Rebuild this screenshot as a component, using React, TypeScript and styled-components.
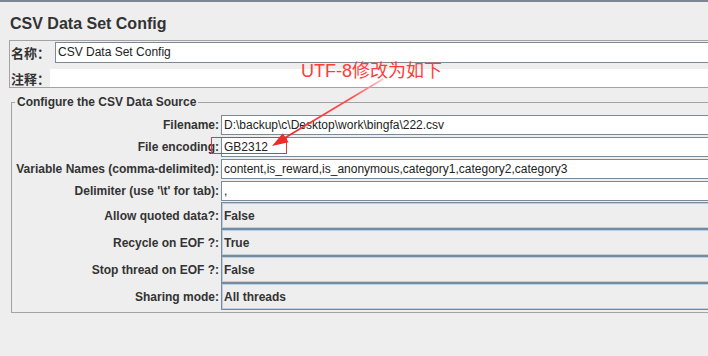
import styled, { createGlobalStyle } from "styled-components";

const GlobalStyle = createGlobalStyle`
  html, body {
    margin: 0;
    padding: 0;
    background: #eeeeee;
    overflow: hidden;
  }
  body {
    font-family: "Liberation Sans", Arial, "Noto Sans CJK SC", sans-serif;
    color: #333333;
  }
`;

const Page = styled.div`
  position: relative;
  width: 708px;
  height: 356px;
  background: #eeeeee;
`;

const TopBar = styled.div`
  height: 2px;
  background: #7d8794;
`;

const Title = styled.h1`
  margin: 0;
  padding: 12px 0 0 10px;
  height: 26px;
  font-size: 16px;
  line-height: 20px;
  font-weight: bold;
  color: #333333;
`;

// name / comment box
const NameBox = styled.div`
  margin-left: 9px;
  height: 46px;
  border: 1px solid #a3a3a3;
  border-right: none;
  display: flex;
  flex-direction: column;
`;

const NameRow = styled.div`
  display: flex;
  height: 21px;
  padding-top: 1px;
`;

const CommentRow = styled.div`
  display: flex;
  height: 18px;
  margin-top: 6px;
`;

const CnLabel = styled.label<{ $width: number }>`
  width: ${(p) => p.$width}px;
  flex: none;
  box-sizing: border-box;
  padding-left: 1px;
  display: flex;
  align-items: center;
  font-family: "Noto Sans CJK SC", sans-serif;
  font-size: 13px;
  font-weight: bold;
  color: #333333;
`;

const NameInput = styled.div`
  flex: 1;
  box-sizing: border-box;
  border: 1px solid #7a8a99;
  border-right: none;
  background: #ffffff;
  padding-left: 2px;
  font-size: 12px;
  line-height: 19px;
  color: #222222;
`;

const CommentArea = styled.div`
  flex: 1;
  background: #ffffff;
`;

// CSV data source group
const Group = styled.fieldset`
  margin: 7px 0 0 11px;
  padding: 6px 0 2px 0;
  border: 1px solid #a3a3a3;
  border-right: none;
  min-width: 0;
`;

const GroupTitle = styled.legend`
  margin-left: 3px;
  padding: 0 2px;
  font-size: 12px;
  line-height: 14px;
  font-weight: bold;
  color: #333333;
`;

const TextRows = styled.div`
  display: flex;
  flex-direction: column;
  gap: 2px;
`;

const ComboRows = styled.div`
  display: flex;
  flex-direction: column;
  margin-top: 1px;
`;

const Row = styled.div<{ $height: number }>`
  display: grid;
  grid-template-columns: 209px 1fr;
  height: ${(p) => p.$height}px;
`;

const Label = styled.label`
  align-self: center;
  text-align: right;
  padding-right: 2px;
  font-size: 12px;
  font-weight: bold;
  white-space: nowrap;
  color: #333333;
`;

const TextField = styled.div`
  box-sizing: border-box;
  border: 1px solid #7a8a99;
  border-right: none;
  background: #ffffff;
  padding-left: 2px;
  font-size: 12px;
  line-height: 18px;
  white-space: nowrap;
  overflow: hidden;
  color: #222222;
`;

const Combo = styled.div`
  box-sizing: border-box;
  border: 1px solid #7a8a99;
  border-right: none;
  box-shadow: inset 1px 1px 0 #b8cfe5, inset 0 -1px 0 #b8cfe5;
  background: #eeeeee;
  padding-left: 2px;
  display: flex;
  align-items: center;
  font-size: 12px;
  font-weight: bold;
  color: #333333;
`;

// red annotation on top of the screenshot
const Note = styled.span`
  position: absolute;
  left: 301px;
  top: 62px;
  font-family: "Liberation Sans", "Noto Sans CJK SC", sans-serif;
  font-size: 18px;
  line-height: 18px;
  color: #ff3b3b;
  white-space: nowrap;
`;

const Highlight = styled.div`
  position: absolute;
  left: 211px;
  top: 137px;
  width: 76px;
  height: 17px;
  box-sizing: border-box;
  border: 1px solid #e83535;
`;

const ArrowLayer = styled.svg`
  position: absolute;
  left: 0;
  top: 0;
  pointer-events: none;
`;

const textRows = [
  { label: "Filename:", value: "D:\\backup\\c\\Desktop\\work\\bingfa\\222.csv" },
  { label: "File encoding:", value: "GB2312" },
  {
    label: "Variable Names (comma-delimited):",
    value: "content,is_reward,is_anonymous,category1,category2,category3",
  },
  { label: "Delimiter (use '\\t' for tab):", value: "," },
];

const comboRows = [
  { label: "Allow quoted data?:", value: "False" },
  { label: "Recycle on EOF ?:", value: "True" },
  { label: "Stop thread on EOF ?:", value: "False" },
  { label: "Sharing mode:", value: "All threads" },
];

export default function App() {
  return (
    <Page>
      <GlobalStyle />
      <TopBar />
      <Title>CSV Data Set Config</Title>
      <NameBox>
        <NameRow>
          <CnLabel $width={45}>名称：</CnLabel>
          <NameInput>CSV Data Set Config</NameInput>
        </NameRow>
        <CommentRow>
          <CnLabel $width={40}>注释：</CnLabel>
          <CommentArea />
        </CommentRow>
      </NameBox>
      <Group>
        <GroupTitle>Configure the CSV Data Source</GroupTitle>
        <TextRows>
          {textRows.map((r) => (
            <Row key={r.label} $height={20}>
              <Label>{r.label}</Label>
              <TextField>{r.value}</TextField>
            </Row>
          ))}
        </TextRows>
        <ComboRows>
          {comboRows.map((r) => (
            <Row key={r.label} $height={27}>
              <Label>{r.label}</Label>
              <Combo>{r.value}</Combo>
            </Row>
          ))}
        </ComboRows>
      </Group>

      <Note>UTF-8修改为如下</Note>
      <Highlight />
      <ArrowLayer width="708" height="356" viewBox="0 0 708 356">
        <defs>
          <linearGradient id="arrowLine" x1="383" y1="79" x2="283" y2="139" gradientUnits="userSpaceOnUse">
            <stop offset="0" stopColor="#ffc4c4" />
            <stop offset="0.3" stopColor="#ff5050" />
            <stop offset="1" stopColor="#f02a2a" />
          </linearGradient>
        </defs>
        <line x1="383" y1="79" x2="283" y2="139" stroke="url(#arrowLine)" strokeWidth="1.6" />
        <polygon points="272,146 288.6,142.2 282.8,133.2" fill="#f02a2a" />
      </ArrowLayer>
    </Page>
  );
}
